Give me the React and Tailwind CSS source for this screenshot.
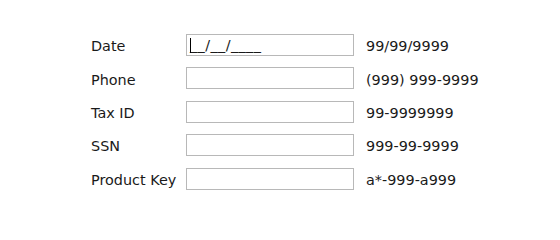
import React from 'react';

const fields = [
  { label: 'Date', mask: '99/99/9999', value: '__/__/____', focused: true },
  { label: 'Phone', mask: '(999) 999-9999' },
  { label: 'Tax ID', mask: '99-9999999' },
  { label: 'SSN', mask: '999-99-9999' },
  { label: 'Product Key', mask: 'a*-999-a999' },
];

export default function App() {
  return (
    <div
      className="w-[560px] h-[220px] bg-white text-[14.4px] text-[#1a1a1a]"
      style={{ fontFamily: '"DejaVu Sans", Verdana, sans-serif' }}
    >
      <div className="pt-[34px] pl-[91px] flex flex-col gap-[11.4px]">
        {fields.map((f) => (
          <div key={f.label} className="flex items-center h-[22px]">
            <div className="w-[95px] shrink-0 whitespace-nowrap pt-[4px]">{f.label}</div>
            <div className="relative w-[168px] h-[22px] shrink-0 border border-[#b8b8b8] bg-white flex items-center pl-[3px] overflow-hidden">
              {f.focused && (
                <>
                  <span className="absolute left-[3px] top-[3px] w-px h-[15px] bg-black" />
                  <span className="tracking-[0.4px] leading-none pt-[1px]">{f.value}</span>
                </>
              )}
            </div>
            <div className="ml-[12px] whitespace-nowrap pt-[4px]">{f.mask}</div>
          </div>
        ))}
      </div>
    </div>
  );
}
